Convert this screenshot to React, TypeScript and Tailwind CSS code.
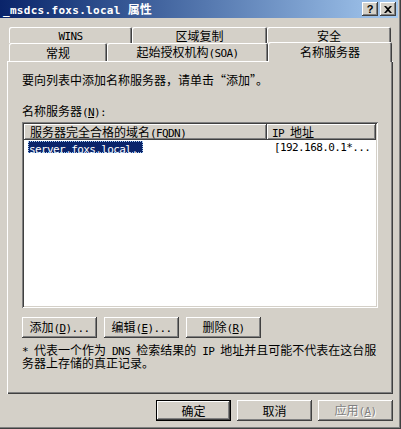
import React from "react";

const LAT = "font-['DejaVu_Sans_Mono',monospace] text-[11px] tracking-[-0.6px]";
const HAN = "font-['Noto_Sans_CJK_SC',sans-serif] text-[12px]";

const RAISED =
  "shadow-[inset_-1px_-1px_#404040,inset_1px_1px_#ffffff,inset_-2px_-2px_#808080]";

// Splits a label into Latin and Han runs; "&" marks the accelerator letter.
function Txt({ s }: { s: string }) {
  const parts: React.ReactNode[] = [];
  const re = /([\x00-\x7f]+)|([^\x00-\x7f]+)/g;
  let m: RegExpExecArray | null;
  let k = 0;
  while ((m = re.exec(s))) {
    if (m[1]) {
      const run = m[1];
      const i = run.indexOf("&");
      if (i >= 0) {
        parts.push(
          <span key={k++} className={LAT}>
            {run.slice(0, i)}
            <span className="underline underline-offset-1">{run[i + 1]}</span>
            {run.slice(i + 2)}
          </span>
        );
      } else {
        parts.push(
          <span key={k++} className={LAT}>
            {run}
          </span>
        );
      }
    } else {
      parts.push(
        <span key={k++} className={HAN}>
          {m[2]}
        </span>
      );
    }
  }
  return <span className="whitespace-pre">{parts}</span>;
}

function CaptionButton({ children }: { children: React.ReactNode }) {
  return (
    <div
      className={`flex h-[14px] w-[16px] items-center justify-center bg-[#d4d0c8] ${RAISED}`}
    >
      {children}
    </div>
  );
}

function Tab({ label, w }: { label: string; w: string }) {
  return (
    <div
      className={`${w} flex h-full items-center justify-center rounded-t-[2px] bg-[#d4d0c8] pt-[1px] leading-[13px] text-black shadow-[inset_1px_1px_#ffffff,inset_-1px_0_#404040,inset_-2px_0_#808080]`}
    >
      <Txt s={label} />
    </div>
  );
}

function PushButton({
  label,
  w = "w-[75px]",
  def = false,
  disabled = false,
}: {
  label: string;
  w?: string;
  def?: boolean;
  disabled?: boolean;
}) {
  return (
    <div
      className={`${w} flex h-[21px] items-center justify-center bg-[#d4d0c8] leading-[13px] ${
        def
          ? "border border-black shadow-[inset_-1px_-1px_#404040,inset_1px_1px_#ffffff,inset_-2px_-2px_#808080]"
          : RAISED
      } ${disabled ? "text-[#808080] [text-shadow:1px_1px_0_#ffffff]" : "text-black"}`}
    >
      <Txt s={label} />
    </div>
  );
}

export default function App() {
  return (
    <div className="flex h-[429px] w-[401px] flex-col bg-[#d4d0c8] text-black shadow-[inset_-1px_-1px_#404040,inset_-2px_-2px_#808080]">
      {/* caption */}
      <div className="flex h-[18px] w-[398px] items-center justify-between bg-gradient-to-r from-[#0a246a] to-[#a6caf0] pl-[3px] pr-[2px]">
        <span className="whitespace-pre text-white font-bold leading-[13px]">
          <span className="font-['DejaVu_Sans_Mono',monospace] text-[11px] tracking-[0.3px]">
            _msdcs.foxs.local{" "}
          </span>
          <span className="font-['Noto_Sans_CJK_SC',sans-serif] text-[12px]">属性</span>
        </span>
        <div className="flex gap-[2px]">
          <CaptionButton>
            <span className="font-['Liberation_Sans',sans-serif] text-[11px] font-bold leading-none text-black">
              ?
            </span>
          </CaptionButton>
          <CaptionButton>
            <svg width="8" height="7" viewBox="0 0 8 7">
              <path d="M0 0h2l2 2 2-2h2L5 3.5 8 7H6L4 5 2 7H0l3-3.5z" fill="#000" />
            </svg>
          </CaptionButton>
        </div>
      </div>

      {/* tab rows */}
      <div className="ml-[9px] mt-[9px] flex h-[16px]">
        <Tab label="WINS" w="w-[123px]" />
        <Tab label="区域复制" w="w-[135px]" />
        <Tab label="安全" w="w-[124px]" />
      </div>
      <div className="ml-[9px] flex h-[18px] items-end">
        <Tab label="常规" w="w-[98px]" />
        <Tab label="起始授权机构(SOA)" w="w-[161px]" />
        <div className="relative top-[1px] z-10 flex h-[20px] w-[124px] items-start justify-center rounded-t-[2px] bg-[#d4d0c8] pt-[3px] leading-[13px] shadow-[inset_1px_1px_#ffffff,inset_-1px_0_#404040,inset_-2px_0_#808080]">
          <Txt s="名称服务器" />
        </div>
      </div>

      {/* page */}
      <div className="ml-[7px] flex h-[333px] w-[386px] flex-col px-[15px] shadow-[inset_1px_1px_#ffffff,inset_-1px_-1px_#404040,inset_-2px_-2px_#808080]">
        <div className="mt-[12px] h-[13px] leading-[13px]">
          <Txt s="要向列表中添加名称服务器，请单击“添加”。" />
        </div>
        <div className="mt-[18px] h-[13px] leading-[13px]">
          <Txt s="名称服务器(&N):" />
        </div>

        {/* list view */}
        <div className="mt-[5px] h-[186px] w-[356px] bg-white shadow-[inset_1px_1px_#808080,inset_-1px_-1px_#ffffff,inset_2px_2px_#404040,inset_-2px_-2px_#d4d0c8] p-[2px]">
          <div className="flex h-[16px]">
            <div className={`flex w-[243px] items-center bg-[#d4d0c8] pl-[6px] leading-[13px] ${RAISED}`}>
              <Txt s="服务器完全合格的域名(FQDN)" />
            </div>
            <div className={`flex w-[109px] items-center bg-[#d4d0c8] pl-[5px] leading-[13px] ${RAISED}`}>
              <Txt s="IP 地址" />
            </div>
          </div>
          <div className="flex h-[13px] items-center">
            <div className="w-[243px] pl-[4px]">
              <span className="inline-block h-[12px] bg-[#0a246a] px-[1px] pr-[6px] leading-[12px] text-white outline-dotted outline-1 -outline-offset-1 outline-[#a6caf0]">
                <Txt s="server.foxs.local." />
              </span>
            </div>
            <div className="pl-[7px] leading-[12px]">
              <Txt s="[192.168.0.1*..." />
            </div>
          </div>
        </div>

        <div className="mt-[9px] flex gap-[7px]">
          <PushButton label="添加(&D)..." w="w-[75px]" />
          <PushButton label="编辑(&E)..." w="w-[75px]" />
          <PushButton label="删除(&R)" w="w-[75px]" />
        </div>

        <div className="mt-[5px] leading-[13px]">
          <div className="h-[13px]">
            <Txt s="* 代表一个作为 DNS 检索结果的 IP 地址并且可能不代表在这台服" />
          </div>
          <div className="h-[13px]">
            <Txt s="务器上存储的真正记录。" />
          </div>
        </div>
      </div>

      {/* dialog buttons */}
      <div className="mt-[6px] flex gap-[6px] pl-[156px]">
        <PushButton label="确定" def />
        <PushButton label="取消" />
        <PushButton label="应用(&A)" disabled />
      </div>
    </div>
  );
}
